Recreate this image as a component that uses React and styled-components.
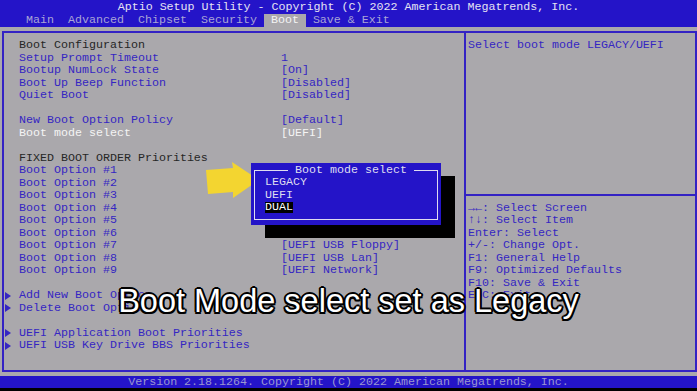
import React from "react";
import styled, { createGlobalStyle } from "styled-components";

const GlobalStyle = createGlobalStyle`
  html, body {
    margin: 0;
    padding: 0;
    background: #000;
  }
`;

const BLUE = "#2414c8";
const GREY = "#aaa8ac";
const INK = "#3526c2";
const LINE = "#3322c4";

const Screen = styled.div`
  position: relative;
  width: 697px;
  height: 391px;
  overflow: hidden;
  background: #000;
  display: flex;
  flex-direction: column;
  font-family: "Liberation Mono", "DejaVu Sans Mono", monospace;
  font-size: 11.67px;
`;

const TopBar = styled.div`
  height: 27px;
  background: ${BLUE};
  display: flex;
  flex-direction: column;
`;

const Title = styled.div`
  height: 14px;
  line-height: 14px;
  text-align: center;
  color: #e4e2f2;
  white-space: pre;
`;

const Tabs = styled.div`
  height: 13px;
  display: flex;
  padding-left: 19px;
`;

const Tab = styled.div`
  padding: 0 7px;
  line-height: 13px;
  white-space: pre;
  color: ${(p) => (p.active ? "#f4f4f4" : "#a9a5d6")};
  background: ${(p) => (p.active ? GREY : "transparent")};
`;

const Body = styled.div`
  flex: 1;
  background: ${GREY};
  padding: 4px 0 4px 2px;
  display: flex;
`;

const Frame = styled.div`
  flex: 1;
  border: 2px solid ${LINE};
  display: flex;
`;

const LeftPanel = styled.div`
  position: relative;
  width: 460px;
  padding: 6px 0 0 15px;
  box-sizing: border-box;
`;

const Row = styled.div`
  display: grid;
  grid-template-columns: 262px 1fr;
  height: 12.5px;
  line-height: 12.5px;
  white-space: pre;
  color: ${(p) => (p.tone === "dark" ? "#262626" : p.tone === "light" ? "#f4f4f4" : INK)};
`;

const SubRow = styled(Row)`
  position: relative;
`;

const Pointer = styled.span`
  position: absolute;
  left: -14px;
  top: 2.5px;
  width: 0;
  height: 0;
  border-top: 4px solid transparent;
  border-bottom: 4px solid transparent;
  border-left: 6px solid ${INK};
`;

const RightPanel = styled.div`
  flex: 1;
  border-left: 2px solid ${LINE};
  padding: 6px 0 0 2px;
  display: flex;
  flex-direction: column;
`;

const HelpBlock = styled.div`
  height: 150px;
  line-height: 12.5px;
  color: ${INK};
  white-space: pre;
`;

const Separator = styled.div`
  height: 12.5px;
  margin-left: -2px;
  display: flex;
  align-items: center;

  &::after {
    content: "";
    flex: 1;
    height: 2px;
    background: ${LINE};
  }
`;

const KeyLine = styled.div`
  height: 12.5px;
  line-height: 12.5px;
  color: ${INK};
  white-space: pre;
`;

const Popup = styled.div`
  position: absolute;
  left: 247px;
  top: 130px;
  width: 190px;
  padding: 1px 3px 5px;
  box-sizing: border-box;
  background: ${BLUE};
  box-shadow: 14px 13px 0 #000;
  color: #dedcf0;
`;

const PopupFrame = styled.fieldset`
  margin: 0;
  padding: 0 0 5px 10px;
  border: 1.5px solid #dedcf0;
  min-width: 0;
`;

const PopupTitle = styled.legend`
  margin: 0 auto;
  padding: 0 7px;
  line-height: 12.5px;
  white-space: pre;
`;

const Choice = styled.div`
  height: 12.5px;
  line-height: 12.5px;
  display: flex;
  align-items: center;

  span {
    display: inline-block;
    height: ${(p) => (p.selected ? "11px" : "auto")};
    line-height: 11px;
    background: ${(p) => (p.selected ? "#000" : "transparent")};
    color: ${(p) => (p.selected ? "#fff" : "inherit")};
  }
`;

const Arrow = styled.svg`
  position: absolute;
  left: 195px;
  top: 128px;
`;

const Footer = styled.div`
  height: 12px;
  line-height: 12px;
  background: ${BLUE};
  color: #9b97cf;
  text-align: center;
  white-space: pre;
  margin-bottom: 3px;
`;

const Caption = styled.div`
  position: absolute;
  left: 0;
  right: 0;
  top: 283px;
  text-align: center;
  font-family: "Liberation Sans", Arial, sans-serif;
  font-size: 32.5px;
  line-height: 36px;
  color: #fff;
  text-shadow:
    -1.5px -1.5px 0 #000, 1.5px -1.5px 0 #000, -1.5px 1.5px 0 #000, 1.5px 1.5px 0 #000,
    0 -2px 0 #000, 0 2px 0 #000, -2px 0 0 #000, 2px 0 0 #000;
`;

const tabs = ["Main", "Advanced", "Chipset", "Security", "Boot", "Save & Exit"];

const rows = [
  { label: "Boot Configuration", tone: "dark" },
  { label: "Setup Prompt Timeout", value: "1" },
  { label: "Bootup NumLock State", value: "[On]" },
  { label: "Boot Up Beep Function", value: "[Disabled]" },
  { label: "Quiet Boot", value: "[Disabled]" },
  { label: "" },
  { label: "New Boot Option Policy", value: "[Default]" },
  { label: "Boot mode select", value: "[UEFI]", tone: "light" },
  { label: "" },
  { label: "FIXED BOOT ORDER Priorities", tone: "dark" },
  { label: "Boot Option #1" },
  { label: "Boot Option #2" },
  { label: "Boot Option #3" },
  { label: "Boot Option #4" },
  { label: "Boot Option #5" },
  { label: "Boot Option #6" },
  { label: "Boot Option #7", value: "[UEFI USB Floppy]" },
  { label: "Boot Option #8", value: "[UEFI USB Lan]" },
  { label: "Boot Option #9", value: "[UEFI Network]" },
  { label: "" },
  { label: "Add New Boot Option", sub: true },
  { label: "Delete Boot Option", sub: true },
  { label: "" },
  { label: "UEFI Application Boot Priorities", sub: true },
  { label: "UEFI USB Key Drive BBS Priorities", sub: true },
];

const keys = [
  "\u2192\u2190: Select Screen",
  "\u2191\u2193: Select Item",
  "Enter: Select",
  "+/-: Change Opt.",
  "F1: General Help",
  "F9: Optimized Defaults",
  "F10: Save & Exit",
  "ESC: Exit",
];

export default function App() {
  return (
    <>
      <GlobalStyle />
      <Screen>
        <TopBar>
          <Title>Aptio Setup Utility - Copyright (C) 2022 American Megatrends, Inc.</Title>
          <Tabs>
            {tabs.map((t) => (
              <Tab key={t} active={t === "Boot"}>
                {t}
              </Tab>
            ))}
          </Tabs>
        </TopBar>
        <Body>
          <Frame>
            <LeftPanel>
              {rows.map((r, i) =>
                r.sub ? (
                  <SubRow key={i}>
                    <Pointer />
                    <span>{r.label}</span>
                  </SubRow>
                ) : (
                  <Row key={i} tone={r.tone}>
                    <span>{r.label}</span>
                    <span>{r.value || ""}</span>
                  </Row>
                )
              )}
              <Arrow width="64" height="42" viewBox="0 0 64 42">
                <path d="M7 9 L34 7 L33 1 L60 19 L34 37 L34 31 L9 33 Z" fill="#f3d530" />
              </Arrow>
              <Popup>
                <PopupFrame>
                  <PopupTitle>Boot mode select</PopupTitle>
                  <Choice>
                    <span>LEGACY</span>
                  </Choice>
                  <Choice>
                    <span>UEFI</span>
                  </Choice>
                  <Choice selected>
                    <span>DUAL</span>
                  </Choice>
                </PopupFrame>
              </Popup>
            </LeftPanel>
            <RightPanel>
              <HelpBlock>Select boot mode LEGACY/UEFI</HelpBlock>
              <Separator />
              {keys.map((k) => (
                <KeyLine key={k}>{k}</KeyLine>
              ))}
            </RightPanel>
          </Frame>
        </Body>
        <Footer>Version 2.18.1264. Copyright (C) 2022 American Megatrends, Inc.</Footer>
        <Caption>Boot Mode select set as Legacy</Caption>
      </Screen>
    </>
  );
}
